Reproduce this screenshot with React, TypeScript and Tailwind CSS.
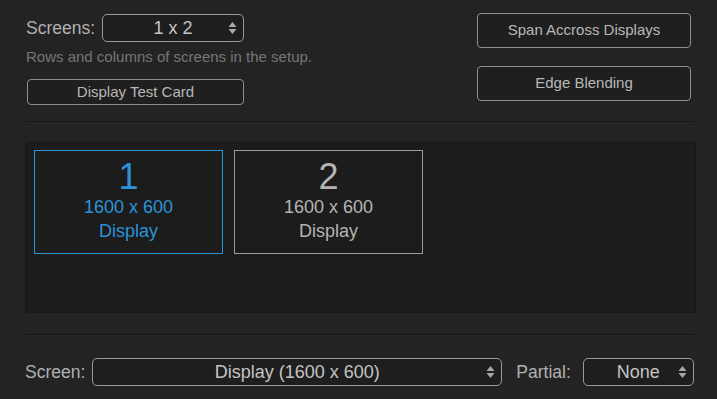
import React from "react";

const FONT = { fontFamily: '"Liberation Sans", Arial, sans-serif' };

function Arrows() {
  return (
    <svg width="9" height="14" viewBox="0 0 9 14" className="shrink-0">
      <path d="M4.5 1 L8.5 6 H0.5 Z" fill="#a8a8a8" />
      <path d="M4.5 13 L8.5 8 H0.5 Z" fill="#a8a8a8" />
    </svg>
  );
}

function Select({ value, className }: { value: string; className: string }) {
  return (
    <div
      className={`relative flex items-center justify-center rounded-[5px] border border-[#9a9a9a] bg-[#1e1e1e] text-[18px] text-[#c4c4c4] ${className}`}
    >
      <span>{value}</span>
      <span className="absolute right-[6px] top-1/2 -translate-y-1/2 flex">
        <Arrows />
      </span>
    </div>
  );
}

function Button({ label, className }: { label: string; className: string }) {
  return (
    <button
      type="button"
      className={`flex items-center justify-center rounded-[4px] border border-[#8e8e8e] bg-[#1f1f1f] text-[15px] text-[#b8b8b8] ${className}`}
    >
      {label}
    </button>
  );
}

function ScreenCard({ n, active }: { n: number; active?: boolean }) {
  return (
    <div
      className={`flex h-[104px] w-[189px] flex-col items-center border-[1.5px] bg-[#1c1c1c] ${
        active ? "border-[#2a93d8] text-[#2a93d8]" : "border-[#9c9c9c] text-[#b4b4b4]"
      }`}
    >
      <div className="mt-[8px] text-[36px] leading-[36px]">{n}</div>
      <div className="mt-[1px] text-[18px] leading-[22px]">1600 x 600</div>
      <div className="mt-[2px] text-[18px] leading-[22px]">Display</div>
    </div>
  );
}

export default function App() {
  return (
    <div className="h-[399px] w-[717px] overflow-hidden bg-[#232323]" style={FONT}>
      {/* top controls */}
      <div className="flex justify-between pl-[26px] pr-[26px] pt-[13px]">
        <div className="flex flex-col">
          <div className="flex items-center mt-[1px]">
            <span className="text-[17.5px] text-[#b0b0b0] mr-[7px]">Screens:</span>
            <Select value="1 x 2" className="h-[28px] w-[142px]" />
          </div>
          <div className="mt-[6px] text-[15px] leading-[18px] text-[#767676]">
            Rows and columns of screens in the setup.
          </div>
          <Button label="Display Test Card" className="mt-[13px] ml-[1px] h-[26px] w-[217px]" />
        </div>
        <div className="flex flex-col">
          <Button label="Span Accross Displays" className="h-[35px] w-[214px]" />
          <Button label="Edge Blending" className="mt-[18px] h-[35px] w-[214px]" />
        </div>
      </div>

      <div className="ml-[26px] mr-[23px] mt-[16px] h-[2px] border-t border-[#141414] bg-[#262626]" />

      {/* screen layout panel */}
      <div className="ml-[25px] mr-[21px] mt-[19px] h-[171px] rounded-[3px] border border-[#171717] bg-[#1c1c1c] px-[8px] pt-[7px]">
        <div className="flex gap-[11px]">
          <ScreenCard n={1} active />
          <ScreenCard n={2} />
        </div>
      </div>

      <div className="ml-[26px] mr-[23px] mt-[21px] h-[2px] border-t border-[#141414] bg-[#262626]" />

      {/* bottom row */}
      <div className="mt-[22px] flex items-center pl-[25px] pr-[23px]">
        <span className="text-[17.5px] text-[#b0b0b0] mr-[7px]">Screen:</span>
        <Select value="Display (1600 x 600)" className="h-[28px] w-[410px]" />
        <span className="ml-[14px] mr-[12px] text-[17.5px] text-[#b0b0b0]">Partial:</span>
        <Select value="None" className="h-[28px] w-[111px]" />
      </div>
    </div>
  );
}
